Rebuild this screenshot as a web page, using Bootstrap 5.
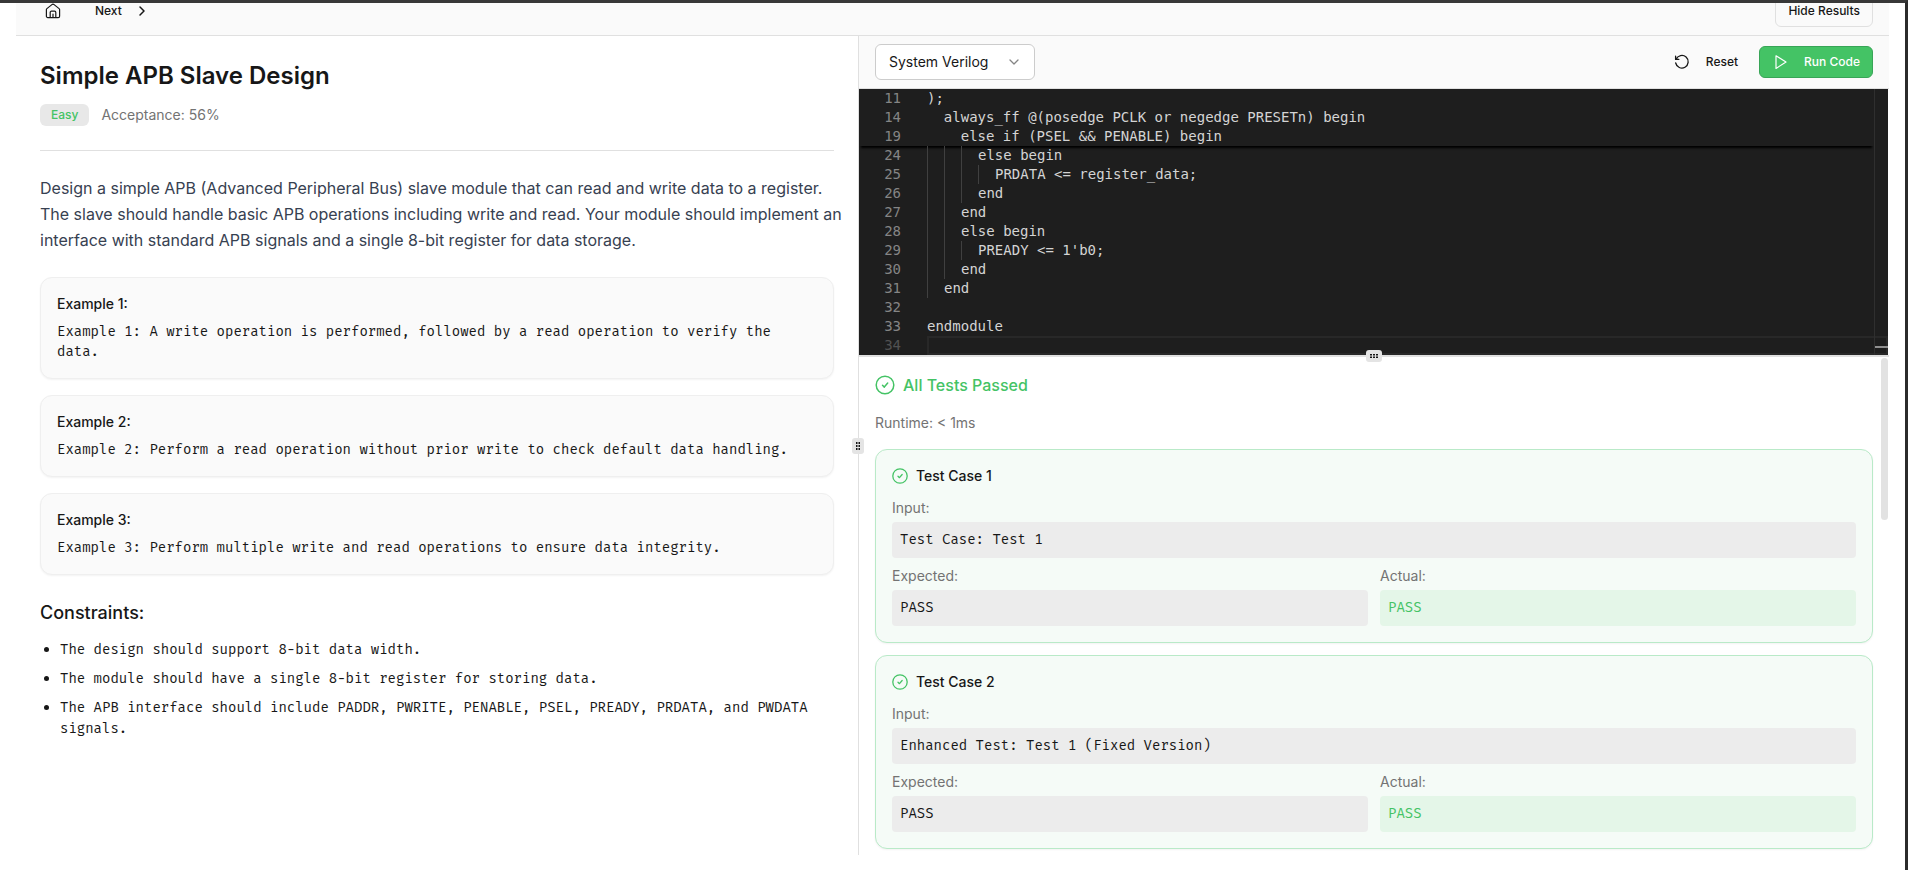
<!DOCTYPE html>
<html lang="en">
<head>
<meta charset="utf-8">
<meta name="viewport" content="width=device-width, initial-scale=1">
<title>Simple APB Slave Design</title>
<link href="https://cdn.jsdelivr.net/npm/bootstrap@5.3.0/dist/css/bootstrap.min.css" rel="stylesheet">
<style>
:root{--line:#e0e0e0;--ink:#171717;--soft:#737373;--green:#44c365;--mono:"Fira Mono","Noto Sans Mono","DejaVu Sans Mono",monospace}
body{font-family:Inter,"Liberation Sans",sans-serif;font-size:14px;line-height:20px;color:var(--ink);border-top:3px solid #383838;border-right:3px solid #2b2b2b;background:#fff;padding:0 16px 15px;min-height:100vh}
svg{flex:none;fill:none;stroke:currentColor;stroke-linecap:round;stroke-linejoin:round}
.topbar{height:33px;background:#fafafa;border-bottom:1px solid var(--line)}
.tool{height:32px;font-size:12px;line-height:16px;font-weight:500;color:var(--ink);border-radius:6px;padding:0 12px}
.tool-outline{border-color:var(--line)}
.tool-run{background:var(--green);border-color:#38a557;color:#fff}
.panes{grid-template-columns:minmax(0,843fr) minmax(0,1030fr)}
.pane-left{border-right:1px solid var(--line)}
h1{font-size:24px;line-height:32px;font-weight:600}
.level{background:#e8e8e8;color:var(--green);font-size:12px;line-height:16px;font-weight:500;border-radius:6px;padding:3px 11px}
.soft{color:var(--soft)}
.intro{font-size:16px;line-height:26px;color:#374151;margin-right:-12px}
.rule-bottom{border-bottom:1px solid var(--line)}
.example{background:#fafafa;border:1px solid #efefef;border-radius:12px;box-shadow:0 1px 2px rgba(0,0,0,.05)}
h2{font-size:18px;line-height:28px;font-weight:500}
h3{font-size:14px;line-height:20px;font-weight:500}
.mono{font-family:var(--mono);font-size:14px}
.limits{line-height:21px;padding-left:20px;margin:11px 0 0;gap:7px}
.limits li::marker{font-family:Inter,sans-serif}
.toolbar{height:53px;background:#fafafa;border-bottom:1px solid var(--line)}
.lang{width:160px;height:36px;border:1px solid #ccc;border-radius:6px;font-size:14px;line-height:20px;color:var(--ink);padding:0 40px 0 13px;background-size:16px 16px;background-position:right 12px center;background-image:url("data:image/svg+xml,%3Csvg xmlns='http://www.w3.org/2000/svg' viewBox='0 0 16 16'%3E%3Cpath fill='none' stroke='%23858585' stroke-width='1.3' stroke-linecap='round' stroke-linejoin='round' d='M4 6l4 4 4-4'/%3E%3C/svg%3E")}
.editor{background:#1e1e1e;color:#d4d4d4;font:14px/19px "DejaVu Sans Mono",monospace;margin-right:1px}
.sticky-code{box-shadow:0 4px 2px -2px #000;margin-right:14px}
.code-line{display:flex;height:19px;white-space:pre}
.num{width:42px;text-align:right;color:#858585;margin-right:26px}
.ind{width:17px;border-left:1px solid #404040}
.current{flex:1;border:2px solid #282828}
.overview{right:0;top:0;bottom:0;width:14px;border-left:1px solid #2f2f2f}
.cursor-mark{right:0;bottom:7px;width:13px;height:2px;background:#909090}
.split-h{height:2px;background:var(--line)}
.grip{background:#e4e4e4;border-radius:3px;color:#171717;z-index:2}
.grip svg{display:block;fill:currentColor;stroke:none}
.thumb{right:1px;top:1px;width:7px;height:162px;border-radius:4px;background:#e2e2e2}
.passed{font-size:16px;line-height:24px;font-weight:500;color:var(--green)}
.results{padding:16px 16px 6px}
.cases{gap:12px}
.case{background:#f5fbf7;border:1px solid #b9eac8;border-radius:12px;box-shadow:0 1px 2px rgba(0,0,0,.05)}
.case h3{margin-bottom:12px}
.case svg{color:var(--green)}
.case .row{--bs-gutter-x:12px}
.value{background:#ececec;border-radius:4px;padding:8px;line-height:20px}
.value-ok{background:#e4f6e8;color:var(--green)}
</style>
</head>
<body>
<header class="topbar d-flex align-items-end justify-content-between overflow-hidden px-3 pb-2">
  <nav class="d-flex gap-2 ps-1">
    <a href="#" class="btn tool d-flex align-items-center p-0 px-2" aria-label="Home"><svg width="16" height="16" viewBox="0 0 16 16" stroke-width="1.2"><path d="M1.4 6.6Q1.4 6 1.9 5.6L7.2 1.4q.8-.6 1.6 0l5.3 4.2q.5.4.5 1v6.6a1.4 1.4 0 0 1-1.4 1.4H2.8a1.4 1.4 0 0 1-1.4-1.4z"/><path d="M5.2 14.5V9.4a1.2 1.2 0 0 1 1.2-1.2h3.2a1.2 1.2 0 0 1 1.2 1.2v5.1M8 11v3.5"/></svg></a>
    <a href="#" class="btn tool d-flex align-items-center gap-3 ms-1">Next<svg width="8" height="16" viewBox="0 0 8 16" stroke-width="1.5"><path d="M2 4l4 4-4 4"/></svg></a>
  </nav>
  <button type="button" class="btn tool tool-outline">Hide Results</button>
</header>
<main class="panes d-grid">
  <section class="pane-left position-relative p-4">
    <h1 class="mb-0">Simple APB Slave Design</h1>
    <div class="rule-bottom d-flex align-items-center mt-2 pt-1 pb-4 mb-4"><span class="level">Easy</span><span class="soft ms-2 ps-1">Acceptance: 56%</span></div>
    <p class="intro mb-4">Design a simple APB (Advanced Peripheral Bus) slave module that can read and write data to a register. The slave should handle basic APB operations including write and read. Your module should implement an interface with standard APB signals and a single 8-bit register for data storage.</p>
    <div class="d-flex flex-column gap-3 mb-4">
      <article class="example p-3"><h3>Example 1:</h3><div class="mono">Example 1: A write operation is performed, followed by a read operation to verify the data.</div></article>
      <article class="example p-3"><h3>Example 2:</h3><div class="mono">Example 2: Perform a read operation without prior write to check default data handling.</div></article>
      <article class="example p-3"><h3>Example 3:</h3><div class="mono">Example 3: Perform multiple write and read operations to ensure data integrity.</div></article>
    </div>
    <h2 class="mb-0">Constraints:</h2>
    <ul class="limits mono d-flex flex-column">
      <li>The design should support 8-bit data width.</li>
      <li>The module should have a single 8-bit register for storing data.</li>
      <li>The APB interface should include PADDR, PWRITE, PENABLE, PSEL, PREADY, PRDATA, and PWDATA signals.</li>
    </ul>
    <div class="grip position-absolute top-50 start-100 translate-middle px-1 py-1"><svg width="4" height="8" viewBox="0 0 4 8"><path d="M0 0h1.5v2H0zM2.5 0H4v2H2.5zM0 3h1.5v2H0zM2.5 3H4v2H2.5zM0 6h1.5v2H0zM2.5 6H4v2H2.5z"/></svg></div>
  </section>
  <section class="pane-right">
    <div class="toolbar d-flex align-items-center justify-content-between px-3">
      <select class="form-select lang" aria-label="Language"><option>System Verilog</option></select>
      <div class="d-flex gap-2">
        <button type="button" class="btn tool d-flex align-items-center gap-3"><svg width="16" height="16" viewBox="0 0 16 16" stroke-width="1.3"><path d="M1.6 2.2v3.2h3.2M2.1 5.2A6.3 6.3 0 1 1 1.7 9"/></svg>Reset</button>
        <button type="button" class="btn tool tool-run d-flex align-items-center gap-3"><svg width="16" height="16" viewBox="0 0 16 16" stroke-width="1.2"><path d="M4 1.8v12.6l10-6.3z"/></svg>Run Code</button>
      </div>
    </div>
    <div class="editor position-relative">
      <div class="sticky-code">
        <div class="code-line"><span class="num">11</span>);</div>
        <div class="code-line"><span class="num">14</span>  always_ff @(posedge PCLK or negedge PRESETn) begin</div>
        <div class="code-line"><span class="num">19</span>    else if (PSEL &amp;&amp; PENABLE) begin</div>
      </div>
      <div class="code-line"><span class="num">24</span><i class="ind"></i><i class="ind"></i><i class="ind"></i>else begin</div>
      <div class="code-line"><span class="num">25</span><i class="ind"></i><i class="ind"></i><i class="ind"></i><i class="ind"></i>PRDATA &lt;= register_data;</div>
      <div class="code-line"><span class="num">26</span><i class="ind"></i><i class="ind"></i><i class="ind"></i>end</div>
      <div class="code-line"><span class="num">27</span><i class="ind"></i><i class="ind"></i>end</div>
      <div class="code-line"><span class="num">28</span><i class="ind"></i><i class="ind"></i>else begin</div>
      <div class="code-line"><span class="num">29</span><i class="ind"></i><i class="ind"></i><i class="ind"></i>PREADY &lt;= 1'b0;</div>
      <div class="code-line"><span class="num">30</span><i class="ind"></i><i class="ind"></i>end</div>
      <div class="code-line"><span class="num">31</span><i class="ind"></i>end</div>
      <div class="code-line"><span class="num">32</span></div>
      <div class="code-line"><span class="num">33</span>endmodule</div>
      <div class="code-line"><span class="num opacity-50">34</span><i class="current"></i></div>
      <div class="overview position-absolute"></div>
      <div class="cursor-mark position-absolute"></div>
    </div>
    <div class="split-h position-relative"><div class="grip position-absolute top-50 start-50 translate-middle px-1 py-1"><svg width="8" height="4" viewBox="0 0 8 4"><path d="M0 0h2v1.5H0zM0 2.5h2V4H0zM3 0h2v1.5H3zM3 2.5h2V4H3zM6 0h2v1.5H6zM6 2.5h2V4H6z"/></svg></div></div>
    <div class="results position-relative">
      <div class="thumb position-absolute"></div>
      <div class="passed d-flex align-items-center gap-2 mb-3"><svg width="20" height="20" viewBox="0 0 20 20" stroke-width="1.5"><circle cx="10" cy="10" r="8.8"/><path d="M7.5 10.3l1.8 1.8 3.4-4"/></svg>All Tests Passed</div>
      <div class="soft mb-3">Runtime: &lt; 1ms</div>
      <div class="cases d-flex flex-column">
      <article class="case p-3">
        <h3 class="d-flex align-items-center gap-2"><svg width="16" height="16" viewBox="0 0 20 20" stroke-width="1.6"><circle cx="10" cy="10" r="9"/><path d="M7.5 10.3l1.8 1.8 3.4-4"/></svg>Test Case 1</h3>
        <div class="soft mb-1">Input:</div><div class="value mono mb-2">Test Case: Test 1</div>
        <div class="row"><div class="col-6"><div class="soft mb-1">Expected:</div><div class="value mono">PASS</div></div><div class="col-6"><div class="soft mb-1">Actual:</div><div class="value value-ok mono">PASS</div></div></div>
      </article>
      <article class="case p-3">
        <h3 class="d-flex align-items-center gap-2"><svg width="16" height="16" viewBox="0 0 20 20" stroke-width="1.6"><circle cx="10" cy="10" r="9"/><path d="M7.5 10.3l1.8 1.8 3.4-4"/></svg>Test Case 2</h3>
        <div class="soft mb-1">Input:</div><div class="value mono mb-2">Enhanced Test: Test 1 (Fixed Version)</div>
        <div class="row"><div class="col-6"><div class="soft mb-1">Expected:</div><div class="value mono">PASS</div></div><div class="col-6"><div class="soft mb-1">Actual:</div><div class="value value-ok mono">PASS</div></div></div>
      </article>
      </div>
    </div>
  </section>
</main>
<script src="https://cdn.jsdelivr.net/npm/bootstrap@5.3.0/dist/js/bootstrap.bundle.min.js"></script>
</body>
</html>
